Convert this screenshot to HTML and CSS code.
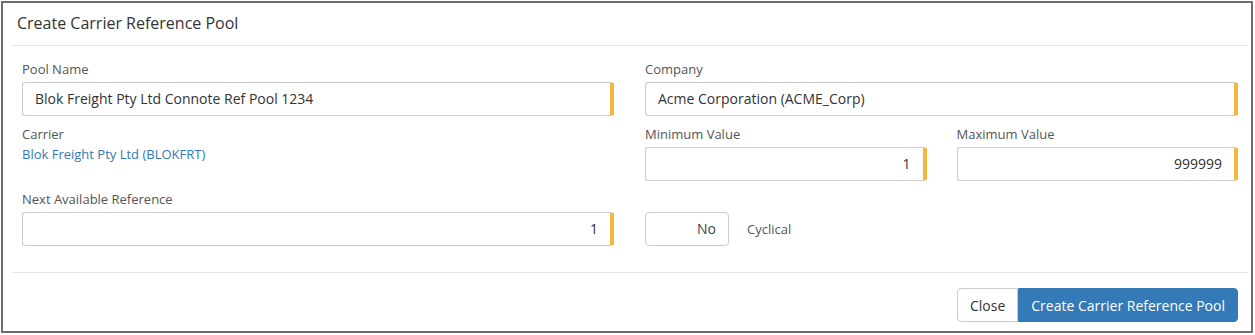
FILE: index.html
```html
<!DOCTYPE html>
<html lang="en">
<head>
  <meta charset="UTF-8" />
  <title>Create Carrier Reference Pool</title>
  <link rel="stylesheet" href="styles.css">
</head>
<body>
  <div class="modal">
    <div class="modal-header">
      <h4>Create Carrier Reference Pool</h4>
    </div>
    <div class="modal-body">
      <div class="form-grid">
        <div class="field">
          <label>Pool Name</label>
          <div class="input required">Blok Freight Pty Ltd Connote Ref Pool 1234</div>
        </div>
        <div class="field">
          <label>Company</label>
          <div class="input required">Acme Corporation (ACME_Corp)</div>
        </div>

        <div class="field">
          <label>Carrier</label>
          <a class="link" href="#">Blok Freight Pty Ltd (BLOKFRT)</a>
        </div>
        <div class="pair">
          <div class="field">
            <label>Minimum Value</label>
            <div class="input required num">1</div>
          </div>
          <div class="field">
            <label>Maximum Value</label>
            <div class="input required num">999999</div>
          </div>
        </div>

        <div class="field">
          <label>Next Available Reference</label>
          <div class="input required num">1</div>
        </div>
        <div class="toggle-row">
          <div class="toggle">No</div>
          <span class="toggle-label">Cyclical</span>
        </div>
      </div>
    </div>
    <div class="modal-footer">
      <div class="btn-group">
        <button class="btn">Close</button>
        <button class="btn btn-primary">Create Carrier Reference Pool</button>
      </div>
    </div>
  </div>
</body>
</html>
```

FILE: styles.css
```css
* {
  box-sizing: border-box;
}
html, body {
  margin: 0;
  background: #fff;
}
body {
  padding: 1px 2px 2px 1px;
  font-family: "Open Sans", "Noto Sans", sans-serif;
  color: #333;
}
.modal {
  border: 2px solid #6e6e6e;
  padding: 0 3px 0 9px;
  background: #fff;
}
.modal-header {
  padding: 9px 5px 11px;
  border-bottom: 1px solid #e5e5e5;
}
.modal-header h4 {
  margin: 0;
  font-size: 16px;
  line-height: 22px;
  font-weight: 400;
  color: #333;
}
.modal-body {
  padding: 15px 10px 16px;
}
.form-grid {
  display: grid;
  grid-template-columns: 592px 1fr;
  column-gap: 31px;
  align-items: start;
}
.pair {
  display: grid;
  grid-template-columns: 1fr 1fr;
  column-gap: 30px;
}
.field {
  margin-bottom: 10px;
}
.field label {
  display: block;
  font-size: 13px;
  line-height: 17px;
  color: #555;
  margin-bottom: 4px;
}
.input {
  height: 34px;
  border: 1px solid #ccc;
  border-radius: 3px;
  padding: 0 12px;
  font-size: 14px;
  line-height: 32px;
  color: #333;
  white-space: nowrap;
}
.input.required {
  border-right: 4px solid #f4b73d;
}
.input.num {
  text-align: right;
  padding-right: 12px;
}
.link {
  display: block;
  margin-top: -2px;
  font-size: 13px;
  line-height: 18px;
  color: #337ab7;
  text-decoration: none;
}
.toggle-row {
  display: flex;
  align-items: center;
  gap: 18px;
  padding-top: 21px;
}
.toggle {
  width: 84px;
  height: 34px;
  border: 1px solid #ccc;
  border-radius: 4px;
  text-align: right;
  padding-right: 12px;
  font-size: 14px;
  line-height: 32px;
  color: #444;
}
.toggle-label {
  font-size: 13px;
  color: #555;
}
.modal-footer {
  border-top: 1px solid #e5e5e5;
  padding: 15px 10px 9px;
  display: flex;
  justify-content: flex-end;
}
.btn-group {
  display: flex;
}
.btn {
  height: 34px;
  font-family: inherit;
  font-size: 14px;
  padding: 0 12px;
  border: 1px solid #ccc;
  background: #fff;
  color: #333;
  border-radius: 4px 0 0 4px;
}
.btn-primary {
  background: #337ab7;
  border-color: #337ab7;
  color: #fff;
  padding: 0 12px;
  border-radius: 0 4px 4px 0;
}
```
